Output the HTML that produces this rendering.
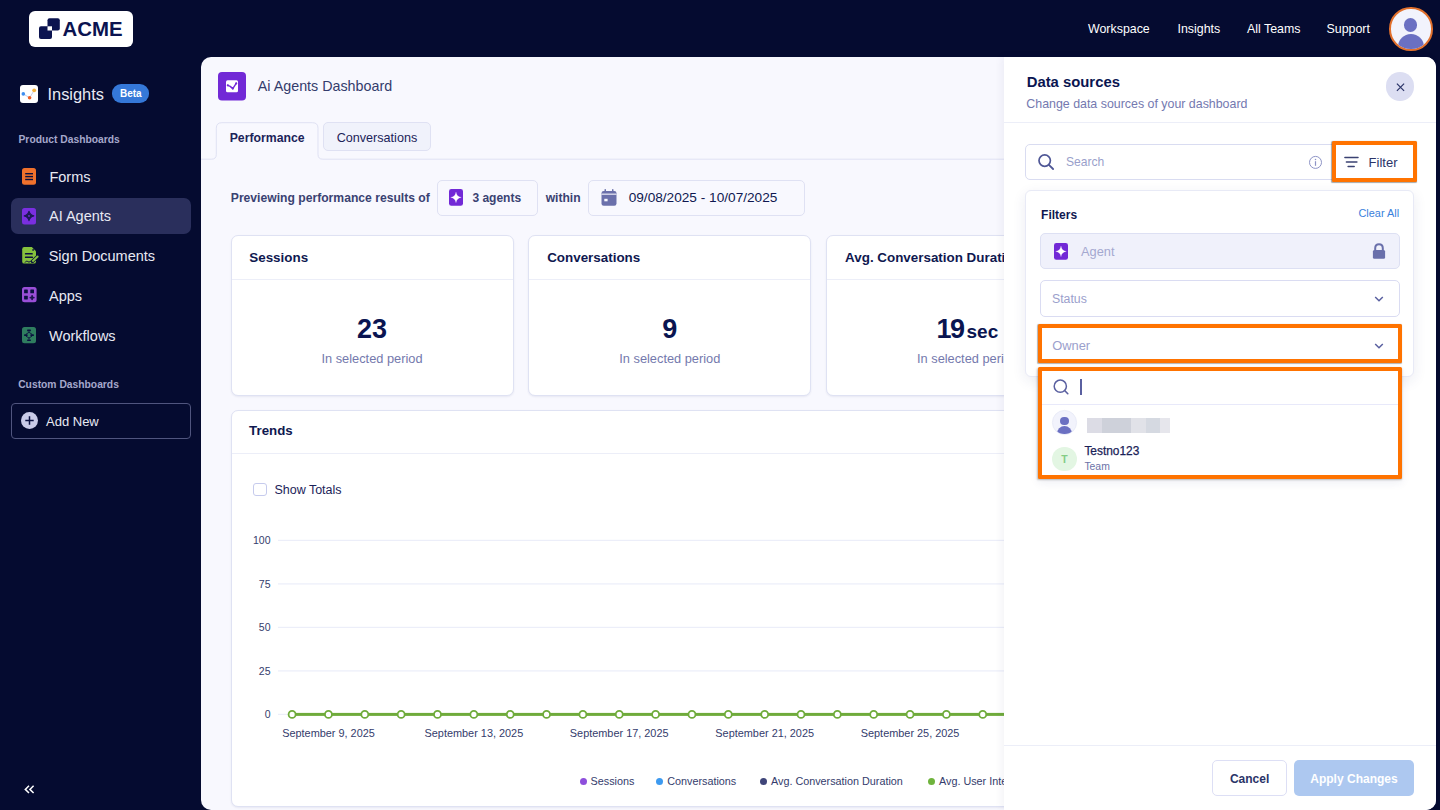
<!DOCTYPE html>
<html><head><meta charset="utf-8">
<style>
*{box-sizing:border-box;margin:0;padding:0}
html,body{width:1440px;height:810px;overflow:hidden;background:#050b30;font-family:"Liberation Sans",sans-serif;color:#0a1551}
.a{position:absolute}
.t{position:absolute;white-space:nowrap;line-height:1}
.nav{color:#fff;font-size:12.4px;top:22.6px}
.side{color:#e8e9f3;font-size:14.5px}
.ic{position:absolute;display:block}
.card{background:#fff;border:1px solid #dfe2f3;border-radius:7px;box-shadow:0 1px 2px rgba(40,50,120,.08)}
.ct{top:251.4px;font-size:13.4px;font-weight:700;color:#0f1850}
.big{top:315.9px;font-size:27px;font-weight:700;color:#0a1551}
.sub{top:353.2px;font-size:12.8px;color:#7479ad}
</style></head>
<body>
<!-- ============ HEADER ============ -->
<div class="a" style="left:29px;top:11px;width:104px;height:35.5px;background:#fff;border-radius:6px"></div>
<svg class="ic" style="left:38px;top:17px" width="24" height="24" viewBox="0 0 24 24">
  <rect x="9.5" y="1.3" width="12.3" height="12.2" rx="2" fill="#0b1350"/>
  <rect x="1" y="9.3" width="13" height="12.8" rx="2" fill="#0b1350"/>
  <rect x="9.5" y="9.3" width="4.5" height="4.2" fill="#fff"/>
</svg>
<div class="t" style="left:62.5px;top:18.5px;font-size:20.4px;font-weight:700;color:#0b1350">ACME</div>

<div class="t nav" style="left:1088px">Workspace</div>
<div class="t nav" style="left:1177.5px">Insights</div>
<div class="t nav" style="left:1247px">All Teams</div>
<div class="t nav" style="left:1326.5px">Support</div>
<div class="a" style="left:1389px;top:7px;width:43.5px;height:43.5px;border-radius:50%;background:#f2f3fc;border:2px solid #e2702c;overflow:hidden">
  <div class="a" style="left:12.6px;top:9.3px;width:13.6px;height:13.6px;border-radius:50%;background:#6b70c2"></div>
  <div class="a" style="left:6.6px;top:25px;width:26px;height:26px;border-radius:50%;background:#6b70c2"></div>
</div>

<!-- ============ SIDEBAR ============ -->
<svg class="ic" style="left:20px;top:84.7px" width="18" height="18" viewBox="0 0 18 18">
  <rect x="0" y="0" width="18" height="18" rx="3" fill="#fff"/>
  <polyline points="3.3,8.9 9.6,12.8 14.2,5.3" fill="none" stroke="#c9cde6" stroke-width="1"/>
  <circle cx="3.3" cy="8.9" r="1.8" fill="#3d8ef0"/>
  <circle cx="9.6" cy="12.8" r="1.8" fill="#ef5f26"/>
  <circle cx="14.2" cy="5.3" r="1.9" fill="#f3b33e"/>
</svg>
<div class="t side" style="left:47.5px;top:86.3px;font-size:16.4px">Insights</div>
<div class="a" style="left:112px;top:84.4px;width:37px;height:18.2px;border-radius:9.1px;background:#3578d8"></div>
<div class="t" style="left:120px;top:89px;font-size:10px;font-weight:700;color:#fff">Beta</div>

<div class="t" style="left:18.5px;top:134.8px;font-size:10.3px;font-weight:700;color:#a5a8cc">Product Dashboards</div>

<!-- Forms -->
<svg class="ic" style="left:22px;top:168px" width="14" height="17" viewBox="0 0 14 17">
  <rect x="0" y="0" width="14" height="16.8" rx="2.5" fill="#f0712c"/>
  <rect x="3.2" y="5" width="7.8" height="1.4" fill="#0b1140"/>
  <rect x="3.2" y="7.9" width="7.8" height="1.4" fill="#0b1140"/>
  <rect x="3.2" y="10.8" width="7.8" height="1.4" fill="#0b1140"/>
</svg>
<div class="t side" style="left:49.4px;top:169.9px">Forms</div>

<!-- AI Agents (selected) -->
<div class="a" style="left:11px;top:198px;width:180px;height:36px;border-radius:7px;background:#2a2f5c"></div>
<svg class="ic" style="left:22px;top:208px" width="14" height="17" viewBox="0 0 14 17">
  <rect x="0" y="0" width="14" height="16.4" rx="2.5" fill="#7a2fe0"/>
  <path d="M7 3.2 Q7.9 7 11.8 7.9 Q7.9 8.8 7 12.6 Q6.1 8.8 2.2 7.9 Q6.1 7 7 3.2Z" fill="#1b1a55" stroke="#1b1a55" stroke-width="1.1" stroke-linejoin="round"/>
  <circle cx="7" cy="7.9" r="0.9" fill="#7a2fe0"/>
</svg>
<div class="t side" style="left:49px;top:209.4px">AI Agents</div>

<!-- Sign Documents -->
<svg class="ic" style="left:22px;top:247px" width="17" height="17" viewBox="0 0 17 17">
  <path d="M2.2 0.1 H9.8 L14 4.3 V14.4 Q14 16.6 11.8 16.6 H2.2 Q0.2 16.6 0.2 14.4 V2.3 Q0.2 0.1 2.2 0.1Z" fill="#86c23d"/>
  <circle cx="11.1" cy="2.9" r="0.9" fill="#0b1140"/>
  <rect x="2.9" y="6" width="7.9" height="1.6" rx="0.6" fill="#0b1140"/>
  <rect x="2.9" y="9.4" width="8.1" height="1.6" rx="0.6" fill="#0b1140"/>
  <path d="M3 15.6 Q4.6 13 5.8 14.5 Q7 16 8.3 14.3 Q9.5 15.6 11 15" fill="none" stroke="#0b1140" stroke-width="1"/>
  <path d="M10.6 14.2 L15.8 9.4" stroke="#0b1140" stroke-width="3.6" stroke-linecap="round"/>
  <path d="M10.9 13.9 L15.6 9.6" stroke="#86c23d" stroke-width="2" stroke-linecap="round"/>
</svg>
<div class="t side" style="left:48.7px;top:249px">Sign Documents</div>

<!-- Apps -->
<svg class="ic" style="left:22px;top:287.3px" width="15" height="16" viewBox="0 0 15 16">
  <rect x="0" y="0" width="14.6" height="15.2" rx="2.5" fill="#9a4fd8"/>
  <rect x="2.1" y="2.6" width="3.7" height="3.7" rx="0.4" fill="#0b1140"/>
  <rect x="8.3" y="2.6" width="3.7" height="3.7" rx="0.4" fill="#0b1140"/>
  <rect x="2.1" y="8.7" width="3.7" height="3.7" rx="0.4" fill="#0b1140"/>
  <path d="M10.1 8.9 V12.3 M8.4 10.6 H11.8" stroke="#1d1650" stroke-width="1.8" stroke-linecap="round"/>
</svg>
<div class="t side" style="left:49px;top:288.6px">Apps</div>

<!-- Workflows -->
<svg class="ic" style="left:22px;top:326.7px" width="14" height="17" viewBox="0 0 14 17">
  <rect x="0" y="0" width="14" height="16.3" rx="2.5" fill="#2f7d5f"/>
  <rect x="5.1" y="2.5" width="3.8" height="1.7" rx="0.5" fill="#0b1140"/>
  <rect x="2.1" y="7.3" width="3.5" height="1.8" rx="0.5" fill="#0b1140"/>
  <rect x="8.4" y="7.3" width="3.5" height="1.8" rx="0.5" fill="#0b1140"/>
  <rect x="5.1" y="12.4" width="3.8" height="1.7" rx="0.5" fill="#0b1140"/>
  <path d="M7 4.2 V5.3 L3.9 7.3 M7 5.3 L10.1 7.3 M3.9 9.1 L7 11 L10.1 9.1 M7 11 V12.4" fill="none" stroke="#0b1140" stroke-width="0.9"/>
</svg>
<div class="t side" style="left:49px;top:328.6px">Workflows</div>

<div class="t" style="left:18.2px;top:380px;font-size:10.3px;font-weight:700;color:#a5a8cc">Custom Dashboards</div>

<div class="a" style="left:11px;top:403px;width:180px;height:35.5px;border-radius:4px;border:1px solid #50557e"></div>
<svg class="ic" style="left:21px;top:412.3px" width="17" height="17" viewBox="0 0 17 17">
  <circle cx="8.5" cy="8.5" r="8.5" fill="#c9cbe8"/>
  <path d="M8.5 4.3 V12.7 M4.3 8.5 H12.7" stroke="#0b1140" stroke-width="1.5"/>
</svg>
<div class="t side" style="left:46px;top:414.6px;font-size:13px">Add New</div>

<svg class="ic" style="left:24px;top:785px" width="11" height="9" viewBox="0 0 11 9">
  <path d="M5 0.8 L1.3 4.4 L5 8 M9.6 0.8 L5.9 4.4 L9.6 8" fill="none" stroke="#fff" stroke-width="1.5"/>
</svg>

<!-- ============ MAIN PANEL ============ -->
<div class="a" id="main" style="left:201px;top:57px;width:1235px;height:753px;background:#f8f8fe;border-radius:10px;overflow:hidden"></div>
<!-- title -->
<svg class="ic" style="left:218px;top:72px" width="28" height="29" viewBox="0 0 28 29">
  <rect x="0" y="0" width="28" height="28.6" rx="4" fill="#7229d6"/>
  <rect x="8" y="8.3" width="12" height="12" rx="1.5" fill="#fff"/>
  <polyline points="9.8,13.3 12.2,14.4 14.8,16.6 18.2,11.4" fill="none" stroke="#7229d6" stroke-width="1.4" stroke-linejoin="round" stroke-linecap="round"/>
  <circle cx="9.8" cy="13.3" r="1.1" fill="#7229d6"/><circle cx="14.8" cy="16.6" r="1.1" fill="#7229d6"/><circle cx="18.2" cy="11.4" r="1.1" fill="#7229d6"/>
</svg>
<div class="t" style="left:257.8px;top:78.7px;font-size:14.3px;color:#343c6c">Ai Agents Dashboard</div>

<!-- tabs -->
<svg class="ic" style="left:200px;top:118px" width="810" height="45" viewBox="200 118 810 45">
  <path d="M201 159.2 H211.5 Q216.3 159.2 216.3 154.4 V128.2 Q216.3 122.7 221.8 122.7 H312.5 Q318 122.7 318 128.2 V154.4 Q318 159.2 322.8 159.2 H1004" fill="#f8f8fe" stroke="#dfe1f3" stroke-width="1"/>
</svg>
<div class="t" style="left:229.7px;top:131.6px;font-size:12.25px;font-weight:700;color:#1b2359">Performance</div>
<div class="a" style="left:323px;top:122.2px;width:108px;height:29.3px;background:#f0f2fb;border:1px solid #dfe1f3;border-radius:5px"></div>
<div class="t" style="left:336.7px;top:132.2px;font-size:12.6px;color:#1b2359">Conversations</div>

<!-- preview row -->
<div class="t" style="left:230.8px;top:191.7px;font-size:12.15px;font-weight:700;color:#3a4272">Previewing performance results of</div>
<div class="a" style="left:437.3px;top:179.5px;width:100.5px;height:36px;border:1px solid #dfe1f3;border-radius:5px;background:#f8f8fe"></div>
<svg class="ic" style="left:449px;top:189px" width="14" height="17" viewBox="0 0 14 17">
  <rect x="0" y="0" width="14" height="16.8" rx="2.3" fill="#7229d6"/>
  <path d="M7 3.1 Q7.6 7.8 12.3 8.4 Q7.6 9 7 13.7 Q6.4 9 1.7 8.4 Q6.4 7.8 7 3.1Z" fill="#fff" stroke="#fff" stroke-width="0.2" stroke-linejoin="round"/>
</svg>
<div class="t" style="left:472.4px;top:192px;font-size:12px;font-weight:700;color:#3a4272">3 agents</div>
<div class="t" style="left:545.7px;top:191.8px;font-size:12.1px;font-weight:700;color:#3a4272">within</div>
<div class="a" style="left:588.3px;top:179.5px;width:216.5px;height:36px;border:1px solid #dfe1f3;border-radius:5px;background:#f8f8fe"></div>
<svg class="ic" style="left:600.5px;top:189px" width="16" height="17" viewBox="0 0 16 17">
  <rect x="0.5" y="2" width="15" height="14.8" rx="2.2" fill="#6b70ab"/>
  <rect x="3.5" y="0" width="1.5" height="3.5" rx="0.7" fill="#6b70ab"/>
  <rect x="11" y="0" width="1.5" height="3.5" rx="0.7" fill="#6b70ab"/>
  <rect x="0.5" y="4.6" width="15" height="1.1" fill="#f8f8fe"/>
  <rect x="3.3" y="9.8" width="3.3" height="2.5" fill="#f8f8fe"/>
</svg>
<div class="t" style="left:628.7px;top:191.2px;font-size:13.65px;color:#0f1850">09/08/2025 - 10/07/2025</div>

<!-- cards -->
<div class="a card" style="left:230.5px;top:235px;width:283px;height:160.5px"></div>
<div class="a" style="left:231.5px;top:279px;width:281px;height:1px;background:#eceef8"></div>
<div class="t ct" style="left:249.3px">Sessions</div>
<div class="t big" style="left:230.5px;width:283px;text-align:center">23</div>
<div class="t sub" style="left:230.5px;width:283px;text-align:center">In selected period</div>

<div class="a card" style="left:528.3px;top:235px;width:283px;height:160.5px"></div>
<div class="a" style="left:529.3px;top:279px;width:281px;height:1px;background:#eceef8"></div>
<div class="t ct" style="left:547.2px">Conversations</div>
<div class="t big" style="left:528.3px;width:283px;text-align:center">9</div>
<div class="t sub" style="left:528.3px;width:283px;text-align:center">In selected period</div>

<div class="a card" style="left:826px;top:235px;width:283px;height:160.5px"></div>
<div class="a" style="left:827px;top:279px;width:281px;height:1px;background:#eceef8"></div>
<div class="t ct" style="left:845.1px">Avg. Conversation Duration</div>
<div class="t big" style="left:936.6px;letter-spacing:-1.6px">19</div>
<div class="t" style="left:966.5px;top:322px;font-size:19px;font-weight:700;color:#0a1551">sec</div>
<div class="t sub" style="left:917px">In selected period</div>

<!-- trends -->
<div class="a card" style="left:230.5px;top:410px;width:900px;height:396.5px"></div>
<div class="a" style="left:231.5px;top:453px;width:898px;height:1px;background:#eceef8"></div>
<div class="t" style="left:249.1px;top:424.4px;font-size:13.3px;font-weight:700;color:#0f1850">Trends</div>
<div class="a" style="left:252.5px;top:482.8px;width:14px;height:13.6px;border:1.3px solid #c6cbed;border-radius:3px;background:#fff"></div>
<div class="t" style="left:274.4px;top:483.6px;font-size:12.5px;color:#1b2359">Show Totals</div>
<svg class="ic" style="left:0;top:0" width="1440" height="810" viewBox="0 0 1440 810">
<rect x="278" y="539.8" width="726" height="1.2" fill="#eceef9"/>
<rect x="278" y="583.3" width="726" height="1.2" fill="#eceef9"/>
<rect x="278" y="626.8" width="726" height="1.2" fill="#eceef9"/>
<rect x="278" y="670.3" width="726" height="1.2" fill="#eceef9"/>
<rect x="278" y="713.8" width="14" height="1.2" fill="#eceef9"/>
<rect x="292" y="712.9" width="712" height="3" fill="#6fab3b"/>
<circle cx="292.10" cy="714.4" r="3.5" fill="#fff" stroke="#6fab3b" stroke-width="1.8"/>
<circle cx="328.45" cy="714.4" r="3.5" fill="#fff" stroke="#6fab3b" stroke-width="1.8"/>
<circle cx="364.80" cy="714.4" r="3.5" fill="#fff" stroke="#6fab3b" stroke-width="1.8"/>
<circle cx="401.15" cy="714.4" r="3.5" fill="#fff" stroke="#6fab3b" stroke-width="1.8"/>
<circle cx="437.50" cy="714.4" r="3.5" fill="#fff" stroke="#6fab3b" stroke-width="1.8"/>
<circle cx="473.85" cy="714.4" r="3.5" fill="#fff" stroke="#6fab3b" stroke-width="1.8"/>
<circle cx="510.20" cy="714.4" r="3.5" fill="#fff" stroke="#6fab3b" stroke-width="1.8"/>
<circle cx="546.55" cy="714.4" r="3.5" fill="#fff" stroke="#6fab3b" stroke-width="1.8"/>
<circle cx="582.90" cy="714.4" r="3.5" fill="#fff" stroke="#6fab3b" stroke-width="1.8"/>
<circle cx="619.25" cy="714.4" r="3.5" fill="#fff" stroke="#6fab3b" stroke-width="1.8"/>
<circle cx="655.60" cy="714.4" r="3.5" fill="#fff" stroke="#6fab3b" stroke-width="1.8"/>
<circle cx="691.95" cy="714.4" r="3.5" fill="#fff" stroke="#6fab3b" stroke-width="1.8"/>
<circle cx="728.30" cy="714.4" r="3.5" fill="#fff" stroke="#6fab3b" stroke-width="1.8"/>
<circle cx="764.65" cy="714.4" r="3.5" fill="#fff" stroke="#6fab3b" stroke-width="1.8"/>
<circle cx="801.00" cy="714.4" r="3.5" fill="#fff" stroke="#6fab3b" stroke-width="1.8"/>
<circle cx="837.35" cy="714.4" r="3.5" fill="#fff" stroke="#6fab3b" stroke-width="1.8"/>
<circle cx="873.70" cy="714.4" r="3.5" fill="#fff" stroke="#6fab3b" stroke-width="1.8"/>
<circle cx="910.05" cy="714.4" r="3.5" fill="#fff" stroke="#6fab3b" stroke-width="1.8"/>
<circle cx="946.40" cy="714.4" r="3.5" fill="#fff" stroke="#6fab3b" stroke-width="1.8"/>
<circle cx="982.75" cy="714.4" r="3.5" fill="#fff" stroke="#6fab3b" stroke-width="1.8"/>
<circle cx="1019.10" cy="714.4" r="3.5" fill="#fff" stroke="#6fab3b" stroke-width="1.8"/>
</svg>
<div class="t" style="left:200px;width:70.5px;text-align:right;top:535.3px;font-size:10.5px;color:#343c6c">100</div>
<div class="t" style="left:200px;width:70.5px;text-align:right;top:578.8px;font-size:10.5px;color:#343c6c">75</div>
<div class="t" style="left:200px;width:70.5px;text-align:right;top:622.3px;font-size:10.5px;color:#343c6c">50</div>
<div class="t" style="left:200px;width:70.5px;text-align:right;top:665.8px;font-size:10.5px;color:#343c6c">25</div>
<div class="t" style="left:200px;width:70.5px;text-align:right;top:709.3px;font-size:10.5px;color:#343c6c">0</div>
<div class="t" style="left:268.5px;width:120px;text-align:center;top:727.9px;font-size:10.9px;color:#343c6c">September 9, 2025</div>
<div class="t" style="left:413.9px;width:120px;text-align:center;top:727.9px;font-size:10.9px;color:#343c6c">September 13, 2025</div>
<div class="t" style="left:559.2px;width:120px;text-align:center;top:727.9px;font-size:10.9px;color:#343c6c">September 17, 2025</div>
<div class="t" style="left:704.7px;width:120px;text-align:center;top:727.9px;font-size:10.9px;color:#343c6c">September 21, 2025</div>
<div class="t" style="left:850.1px;width:120px;text-align:center;top:727.9px;font-size:10.9px;color:#343c6c">September 25, 2025</div>
<div class="a" style="left:579.8px;top:778.3px;width:7.2px;height:7.2px;border-radius:50%;background:#8e4fdc"></div>
<div class="t" style="left:590.6px;top:776.4px;font-size:10.8px;color:#343c6c">Sessions</div>
<div class="a" style="left:655.8px;top:778.3px;width:7.2px;height:7.2px;border-radius:50%;background:#3d9af0"></div>
<div class="t" style="left:667.2px;top:776.4px;font-size:10.8px;color:#343c6c">Conversations</div>
<div class="a" style="left:759.8px;top:778.3px;width:7.2px;height:7.2px;border-radius:50%;background:#3f4579"></div>
<div class="t" style="left:771px;top:776.4px;font-size:10.8px;color:#343c6c">Avg. Conversation Duration</div>
<div class="a" style="left:928.3px;top:778.3px;width:7.2px;height:7.2px;border-radius:50%;background:#6fb33c"></div>
<div class="t" style="left:939px;top:776.4px;font-size:10.8px;color:#343c6c">Avg. User Interactions</div>


<!-- ============ DRAWER ============ -->
<div class="a" id="drawer" style="left:1004px;top:57px;width:432px;height:753px;background:#fff;border-radius:0 10px 10px 0;box-shadow:-2px 0 8px rgba(30,40,110,.06)"></div>
<div class="t" style="left:1026.7px;top:74.6px;font-size:14.85px;font-weight:700;color:#0a1551">Data sources</div>
<div class="t" style="left:1026.3px;top:97.8px;font-size:12.4px;color:#7479b0">Change data sources of your dashboard</div>
<div class="a" style="left:1385.6px;top:72.1px;width:28.8px;height:28.8px;border-radius:50%;background:#dcdef2"></div>
<svg class="ic" style="left:1395px;top:81.5px" width="11" height="11" viewBox="0 0 11 11">
  <path d="M1.9 1.6 L9.1 8.8 M9.1 1.6 L1.9 8.8" stroke="#2b3468" stroke-width="1.2"/>
</svg>
<div class="a" style="left:1004px;top:122px;width:432px;height:1px;background:#eceef8"></div>

<!-- search -->
<div class="a" style="left:1025.2px;top:144px;width:320px;height:35.8px;border:1px solid #d9dcf1;border-radius:5px;background:#fff"></div>
<svg class="ic" style="left:1036px;top:152px" width="20" height="20" viewBox="0 0 20 20">
  <circle cx="8.7" cy="8.6" r="5.7" fill="none" stroke="#4f5796" stroke-width="1.7"/>
  <path d="M12.9 12.8 L17.1 17" stroke="#4f5796" stroke-width="1.8" stroke-linecap="round"/>
</svg>
<div class="t" style="left:1065.9px;top:156.4px;font-size:12.1px;color:#9a9fcb">Search</div>
<svg class="ic" style="left:1308px;top:154.5px" width="15" height="15" viewBox="0 0 15 15">
  <circle cx="7.5" cy="7.4" r="6" fill="none" stroke="#8e94c6" stroke-width="1"/>
  <rect x="6.9" y="6.2" width="1.2" height="4.6" fill="#8e94c6"/>
  <circle cx="7.5" cy="4.4" r="0.75" fill="#8e94c6"/>
</svg>

<!-- filter btn -->
<div class="a" style="left:1332.1px;top:141.2px;width:84.6px;height:41px;border:4px solid #ff7300;border-radius:1.5px;background:#fff;box-shadow:-0.5px 0.5px 1px rgba(0,0,0,.35)"></div>
<svg class="ic" style="left:1343px;top:154px" width="17" height="15" viewBox="0 0 17 15">
  <path d="M1.9 3.5 H15 M3.4 7.9 H13.9 M5.1 12.5 H11.2" stroke="#3a4272" stroke-width="1.5" stroke-linecap="round"/>
</svg>
<div class="t" style="left:1368.6px;top:155.6px;font-size:13px;color:#2b3468">Filter</div>

<!-- filter card -->
<div class="a" style="left:1025.3px;top:190.3px;width:388.8px;height:186.3px;border:1px solid #e8eaf6;border-radius:6px;background:#fff;box-shadow:0 4px 14px rgba(30,40,110,.09)"></div>
<div class="t" style="left:1041.1px;top:208.5px;font-size:12px;font-weight:700;color:#0f1850">Filters</div>
<div class="t" style="left:1358.5px;top:207.7px;font-size:10.9px;color:#3a7fdc">Clear All</div>

<div class="a" style="left:1040.2px;top:233.2px;width:359.5px;height:36.3px;border:1px solid #dde0f3;border-radius:5px;background:#f0f1fb"></div>
<svg class="ic" style="left:1054px;top:243px" width="14" height="17" viewBox="0 0 14 17">
  <rect x="0" y="0" width="14" height="16.8" rx="2.3" fill="#7229d6"/>
  <path d="M7 3.1 Q7.6 7.8 12.3 8.4 Q7.6 9 7 13.7 Q6.4 9 1.7 8.4 Q6.4 7.8 7 3.1Z" fill="#fff" stroke="#fff" stroke-width="0.2" stroke-linejoin="round"/>
</svg>
<div class="t" style="left:1081px;top:246px;font-size:12.8px;color:#a4a8d0">Agent</div>
<svg class="ic" style="left:1372px;top:243px" width="14" height="17" viewBox="0 0 14 17">
  <path d="M3.2 7.5 V5.2 Q3.2 1.2 7 1.2 Q10.8 1.2 10.8 5.2 V7.5" fill="none" stroke="#6a70ab" stroke-width="2"/>
  <rect x="0.9" y="7" width="12.2" height="8.8" rx="1.5" fill="#6a70ab"/>
</svg>

<div class="a" style="left:1040.1px;top:280.2px;width:359.7px;height:36.5px;border:1px solid #dadcf2;border-radius:5px;background:#fff"></div>
<div class="t" style="left:1052px;top:292.5px;font-size:12.3px;color:#9ba0cc">Status</div>
<svg class="ic" style="left:1373px;top:294px" width="12" height="10" viewBox="0 0 12 10">
  <path d="M2.2 3 L6 6.8 L9.8 3" fill="none" stroke="#5a60a0" stroke-width="1.5"/>
</svg>

<div class="a" style="left:1038.4px;top:324.1px;width:363.8px;height:39.4px;border:4px solid #ff7300;border-radius:1.5px;background:#fff;box-shadow:-0.5px 0.5px 1px rgba(0,0,0,.3)"></div>
<div class="t" style="left:1052.2px;top:339.6px;font-size:12.9px;color:#9ba0cc">Owner</div>
<svg class="ic" style="left:1373px;top:340.8px" width="12" height="10" viewBox="0 0 12 10">
  <path d="M2.2 3 L6 6.8 L9.8 3" fill="none" stroke="#5a60a0" stroke-width="1.5"/>
</svg>

<!-- dropdown -->
<div class="a" style="left:1037.8px;top:367px;width:364.4px;height:112.1px;border:4px solid #ff7300;border-radius:1.5px;background:#fff;box-shadow:-0.5px 1px 2px rgba(0,0,0,.25), 0 4px 10px rgba(30,40,110,.07)"></div>
<svg class="ic" style="left:1051px;top:377px" width="20" height="20" viewBox="0 0 20 20">
  <circle cx="9.3" cy="9.2" r="6.1" fill="none" stroke="#5a60a0" stroke-width="1.5"/>
  <path d="M13.6 13.5 L16.8 16.7" stroke="#5a60a0" stroke-width="1.6" stroke-linecap="round"/>
</svg>
<div class="a" style="left:1080px;top:379.3px;width:1.8px;height:15.4px;background:#5a60a0"></div>
<div class="a" style="left:1041.8px;top:404px;width:356.4px;height:1px;background:#e8e9fa"></div>

<div class="a" style="left:1052.1px;top:410.2px;width:24.6px;height:24.6px;border-radius:50%;background:#f2f3fc;border:1px solid #eaecf8;overflow:hidden">
  <div class="a" style="left:7.3px;top:5.8px;width:8.2px;height:8.2px;border-radius:50%;background:#6b70c2"></div>
  <div class="a" style="left:3.6px;top:14.5px;width:15.6px;height:16px;border-radius:50% 50% 0 0;background:#6b70c2"></div>
</div>
<div class="a" style="left:1087.4px;top:418.4px;width:82.6px;height:14.4px;background:linear-gradient(90deg,#dcdce5 0,#dcdce5 17.8%,#ced1da 17.8%,#ced1da 52.8%,#e1e2e8 52.8%,#e1e2e8 70.6%,#d5d9e1 70.6%,#d5d9e1 87.8%,#e6e6ec 87.8%)"></div>
<div class="a" style="left:1052.1px;top:446.5px;width:24.6px;height:24.6px;border-radius:50%;background:#e3f6e3"></div>
<div class="t" style="left:1052.1px;width:24.6px;text-align:center;top:454.3px;font-size:10.5px;font-weight:700;color:#84cc86">T</div>
<div class="t" style="left:1084.4px;top:446.2px;font-size:11.9px;font-weight:400;color:#1a2257;-webkit-text-stroke:0.25px #1a2257">Testno123</div>
<div class="t" style="left:1084.4px;top:461.5px;font-size:10.4px;color:#6c73a8">Team</div>

<!-- footer -->
<div class="a" style="left:1004px;top:745.3px;width:432px;height:1px;background:#eceef8"></div>
<div class="a" style="left:1212.2px;top:760.3px;width:74.5px;height:36.2px;border:1px solid #dddff5;border-radius:5px;background:#fff"></div>
<div class="t" style="left:1229.9px;top:772.6px;font-size:12px;font-weight:700;color:#2b3468">Cancel</div>
<div class="a" style="left:1294px;top:760.4px;width:120.4px;height:35.8px;border-radius:5px;background:#adc8f0"></div>
<div class="t" style="left:1310.3px;top:772.5px;font-size:12px;font-weight:700;color:#fff">Apply Changes</div>

</body></html>
